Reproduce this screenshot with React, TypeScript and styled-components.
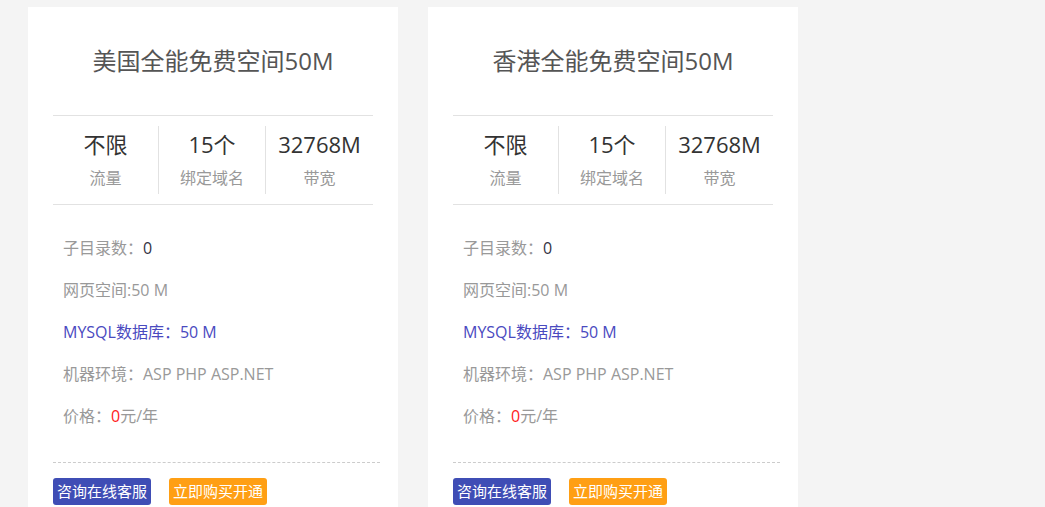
import React from "react";
import styled, { createGlobalStyle } from "styled-components";

const Global = createGlobalStyle`
  body { margin: 0; background: #f4f4f4; font-family: "Microsoft YaHei", "Open Sans", "Noto Sans CJK SC", sans-serif; }
`;
const Page = styled.div`display: flex; gap: 30px; padding: 7px 0 0 28px;`;
const Card = styled.div`width: 370px; height: 500px; background: #fff; padding: 0 25px; box-sizing: border-box;`;
const Title = styled.div`height: 108px; border-bottom: 1px solid #e2e2e2; text-align: center; line-height: 108px; font-size: 24px; color: #555;`;
const Stats = styled.div`display: grid; grid-template-columns: 105px 107px 108px; padding: 10px 0; border-bottom: 1px solid #e2e2e2;`;
const Stat = styled.div<{ $first?: boolean }>`
  text-align: center; height: 68px; border-left: ${p => (p.$first ? "none" : "1px solid #e2e2e2")};
`;
const Val = styled.div`font-size: 22px; color: #333; line-height: 26px; margin-top: 5px;`;
const Lab = styled.div`font-size: 16px; color: #999; line-height: 20px; margin-top: 11px;`;
const List = styled.div`padding: 32px 10px 35px; display: flex; flex-direction: column; gap: 20px;`;
const Item = styled.div<{ $c?: string }>`font-size: 16px; line-height: 22px; color: ${p => p.$c || "#999"};`;
const Num = styled.span<{ $c: string }>`color: ${p => p.$c};`;
const Foot = styled.div`margin-right: -7px; border-top: 1px dashed #ccc; padding-top: 15px; display: flex; gap: 18px;`;
const Btn = styled.span<{ $bg: string }>`
  background: ${p => p.$bg}; color: #fff; font-size: 15px; line-height: 27px; padding: 0 4px; border-radius: 3px;
`;

const PlanCard = ({ name }: { name: string }) => (
  <Card>
    <Title>{name}</Title>
    <Stats>
      <Stat $first><Val>不限</Val><Lab>流量</Lab></Stat>
      <Stat><Val>15个</Val><Lab>绑定域名</Lab></Stat>
      <Stat><Val>32768M</Val><Lab>带宽</Lab></Stat>
    </Stats>
    <List>
      <Item>子目录数：<Num $c="#334">0</Num></Item>
      <Item>网页空间:50 M</Item>
      <Item $c="#4a4abf">MYSQL数据库：50 M</Item>
      <Item>机器环境：ASP PHP ASP.NET</Item>
      <Item>价格：<Num $c="#ff2222">0</Num>元/年</Item>
    </List>
    <Foot>
      <Btn $bg="#3f4db5">咨询在线客服</Btn>
      <Btn $bg="#ff9f14">立即购买开通</Btn>
    </Foot>
  </Card>
);

export default function App() {
  return (
    <>
      <Global />
      <Page>
        <PlanCard name="美国全能免费空间50M" />
        <PlanCard name="香港全能免费空间50M" />
      </Page>
    </>
  );
}
